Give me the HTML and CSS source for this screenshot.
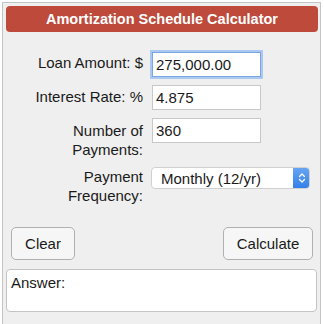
FILE: index.html
```html
<!DOCTYPE html>
<html>
<head>
<meta charset="utf-8">
<link rel="stylesheet" href="styles.css">
</head>
<body>
<div class="calc">
  <div class="title">Amortization Schedule Calculator</div>
  <div class="form">
    <div class="row">
      <label class="lbl">Loan Amount: $</label>
      <input class="field focused" type="text" value="275,000.00">
    </div>
    <div class="row">
      <label class="lbl">Interest Rate: %</label>
      <input class="field" type="text" value="4.875">
    </div>
    <div class="row">
      <label class="lbl two">Number of Payments:</label>
      <input class="field" type="text" value="360">
    </div>
    <div class="row">
      <label class="lbl two sel-lbl">Payment Frequency:</label>
      <div class="select">
        <span class="sel-text">Monthly (12/yr)</span>
        <span class="stepper">
          <svg width="8" height="12" viewBox="0 0 8 12"><path d="M1.5 4.5 L4 2 L6.5 4.5 M1.5 7.5 L4 10 L6.5 7.5" fill="none" stroke="#fff" stroke-width="1.3" stroke-linecap="round" stroke-linejoin="round"/></svg>
        </span>
      </div>
    </div>
  </div>
  <div class="buttons">
    <button class="btn">Clear</button>
    <button class="btn">Calculate</button>
  </div>
  <div class="answer">Answer:</div>
</div>
</body>
</html>
```
FILE: styles.css
```css
html, body {
  margin: 0;
  padding: 0;
  background: #ffffff;
}
body {
  font-family: "Liberation Sans", Arial, sans-serif;
  color: #1a1a1a;
}
.calc {
  margin: 2px 0 0 2px;
  width: 319px;
  box-sizing: border-box;
  border: 1px solid #c4c4c4;
  background: #efefef;
  padding: 3px 3px 12px 3px;
}
.title {
  background: #bd4a3b;
  color: #ffffff;
  font-weight: bold;
  font-size: 14.5px;
  text-align: center;
  height: 26px;
  line-height: 26px;
  border-radius: 4px;
  margin-right: -1px;
}
.form {
  display: flex;
  flex-direction: column;
  padding-top: 19px;
  gap: 8px;
}
.row {
  display: flex;
  align-items: flex-start;
}
.lbl {
  width: 137px;
  box-sizing: border-box;
  padding-left: 22px;
  text-align: right;
  font-size: 15px;
  line-height: 18.5px;
  padding-top: 3px;
  margin-right: 9px;
}
.lbl.two {
  padding-top: 4px;
}
.lbl.sel-lbl {
  padding-top: 1px;
}
.field {
  width: 109px;
  height: 25px;
  box-sizing: border-box;
  border: 1px solid #c8c8c8;
  background: #ffffff;
  font-family: "Liberation Sans", Arial, sans-serif;
  font-size: 15px;
  color: #1a1a1a;
  padding: 0 3px;
  margin: 0;
  outline: none;
}
.field.focused {
  border: 1px solid #7aa6e4;
  box-shadow: 0 0 0 2px #a9c8f2;
}
.row:first-child .field {
  margin-top: 1px;
}
.select {
  width: 159px;
  height: 22px;
  margin-left: -1px;
  box-sizing: border-box;
  border: 1px solid #d0d0d0;
  border-radius: 4px;
  background: #ffffff;
  display: flex;
  align-items: center;
  justify-content: space-between;
  font-size: 15px;
  overflow: hidden;
}
.sel-text {
  padding-left: 9px;
}
.stepper {
  width: 17px;
  height: 22px;
  margin-right: -1px;
  background: linear-gradient(#6aa6f3, #2f7fe9);
  border-radius: 0 4px 4px 0;
  display: flex;
  align-items: center;
  justify-content: center;
}
.buttons {
  display: flex;
  justify-content: space-between;
  padding: 22px 4px 0 5px;
}
.btn {
  height: 33px;
  box-sizing: border-box;
  border: 1px solid #b0b0b0;
  border-radius: 5px;
  background: #f6f6f6;
  font-family: "Liberation Sans", Arial, sans-serif;
  font-size: 15px;
  color: #1a1a1a;
  padding: 0 12px;
  margin: 0;
}
.btn:first-child {
  width: 64px;
}
.btn:last-child {
  width: 90px;
}
.answer {
  margin-top: 9px;
  height: 43px;
  box-sizing: border-box;
  border: 1px solid #c4c4c4;
  border-radius: 4px;
  background: #ffffff;
  font-size: 15px;
  padding: 4px 4px;
  line-height: 18px;
}
```
